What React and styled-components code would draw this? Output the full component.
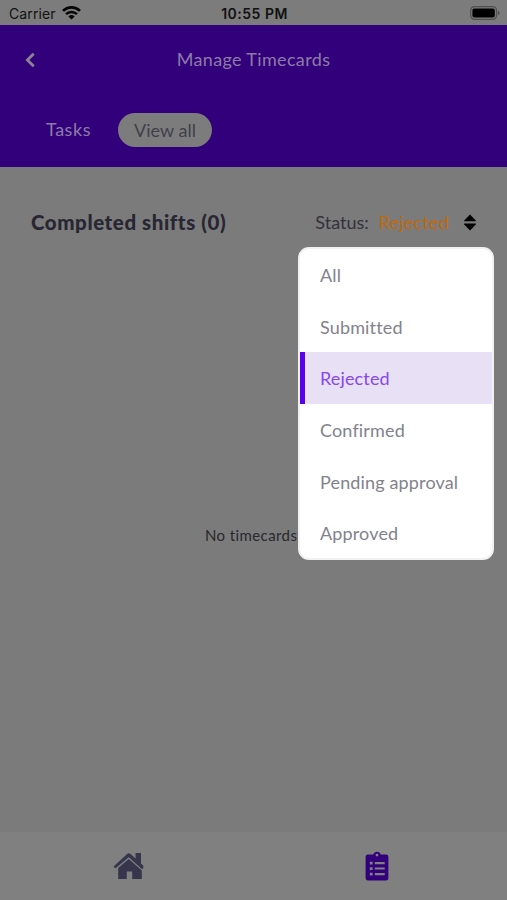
import styled, { createGlobalStyle } from "styled-components";

const GlobalStyle = createGlobalStyle`
  * {
    box-sizing: border-box;
  }

  body {
    margin: 0;
    background: #7b7b7b;
    font-family: Lato, "Open Sans", sans-serif;
  }
`;

const Screen = styled.div`
  display: flex;
  flex-direction: column;
  width: 507px;
  height: 900px;
  overflow: hidden;
  background-color: #7b7b7b;
`;

const StatusBar = styled.div`
  display: grid;
  grid-template-columns: 1fr auto 1fr;
  align-items: center;
  height: 25px;
  padding: 2px 7px 0 9px;
  background-color: #7c7c7c;
  color: #111;
  font-family: Inter, "Liberation Sans", sans-serif;
  font-size: 14px;
`;

const Carrier = styled.div`
  display: flex;
  align-items: center;
  gap: 6px;
  letter-spacing: 0.1px;
`;

const Clock = styled.time`
  font-weight: 600;
  letter-spacing: 0.5px;
`;

const WifiIcon = styled.svg`
  display: block;
  margin-bottom: 2px;
`;

const BatteryIcon = styled.svg`
  display: block;
  justify-self: end;
  margin-bottom: 1px;
`;

const Header = styled.header`
  height: 142px;
  background-color: #33007c;
  color: #8b7ca6;
`;

const TitleRow = styled.div`
  display: grid;
  grid-template-columns: 24px 1fr 24px;
  align-items: center;
  height: 69px;
  padding: 0 18px;
`;

const BackButton = styled.button`
  display: flex;
  justify-content: center;
  padding: 0;
  border: none;
  background: none;
  color: #8a8494;
`;

const Title = styled.h1`
  margin: 0 0 2px;
  font-size: 18px;
  font-weight: 400;
  line-height: 24px;
  letter-spacing: 0.35px;
  text-align: center;
`;

const Tabs = styled.nav`
  display: flex;
  gap: 11px;
  padding: 19px 30px 0;
`;

const Tab = styled.button`
  height: 34px;
  padding: ${(props) => (props.$active ? "0 16px 1px" : "0 16px 3px")};
  border: none;
  border-radius: 17px;
  background-color: ${(props) => (props.$active ? "#7c7c7c" : "transparent")};
  color: ${(props) => (props.$active ? "#41404a" : "#8b7ca6")};
  font-family: inherit;
  font-size: 18px;
  letter-spacing: ${(props) => (props.$active ? "0.05px" : "0.55px")};
`;

const Content = styled.main`
  display: flex;
  flex-direction: column;
  flex-grow: 1;
`;

const ListHeading = styled.div`
  display: flex;
  justify-content: space-between;
  align-items: center;
  height: 110px;
  padding: 0 30px 0 31px;
`;

const Subtitle = styled.h2`
  margin: 0;
  color: #272632;
  font-size: 20.5px;
  font-weight: 900;
  letter-spacing: 0.57px;
`;

const Filter = styled.div`
  position: relative;
  display: flex;
  align-items: center;
  color: #33323c;
  font-size: 18px;
  line-height: 24px;
`;

const FilterValue = styled.span`
  margin: 0 15px 0 10px;
  color: #c0690c;
  letter-spacing: 0.2px;
`;

const Menu = styled.ul`
  position: absolute;
  top: 37px;
  right: -17px;
  width: 196px;
  height: 313px;
  margin: 0;
  padding: 0;
  border: 2px solid #f1f1f3;
  border-radius: 11px;
  background-color: #fff;
  list-style: none;
`;

const MenuItem = styled.li`
  display: flex;
  align-items: center;
  height: 51.7px;
  padding-left: ${(props) => (props.$active ? "15px" : "20px")};
  border-left: ${(props) => (props.$active ? "5px solid #5d00ee" : "none")};
  background-color: ${(props) => (props.$active ? "#e8e0f4" : "transparent")};
  color: ${(props) => (props.$active ? "#8748ec" : "#83828c")};
  letter-spacing: 0.15px;
`;

const EmptyText = styled.p`
  margin: 247px 0 0;
  padding-left: 205px;
  color: #29282e;
  font-size: 15px;
  line-height: 22px;
  letter-spacing: 0.4px;
`;

const BottomNav = styled.nav`
  display: grid;
  grid-template-columns: 1fr 1fr;
  align-items: center;
  height: 68px;
  padding: 0 6px 0 4px;
  background-color: #808080;
`;

const NavItem = styled.button`
  display: flex;
  justify-content: center;
  padding: 0;
  border: none;
  background: none;
  color: ${(props) => (props.$active ? "#33007c" : "#37354b")};
`;

const statuses = [
  "All",
  "Submitted",
  "Rejected",
  "Confirmed",
  "Pending approval",
  "Approved",
];

const Wifi = () => (
  <WifiIcon width="19" height="14" viewBox="0 0 19 14" fill="none" stroke="#050505">
    <path d="M1 4.9a12.2 12.2 0 0 1 17 0" strokeWidth="2.7" />
    <path d="M4 8.2a7.9 7.9 0 0 1 11 0" strokeWidth="2.5" />
    <path d="M9.5 13.6 6.4 10.5a4.5 4.5 0 0 1 6.2 0z" fill="#050505" stroke="none" />
  </WifiIcon>
);

const Battery = () => (
  <BatteryIcon width="30" height="14" viewBox="0 0 30 14">
    <rect x="0.7" y="0.7" width="25.8" height="12.6" rx="3.7" fill="none" stroke="#505050" strokeWidth="1.2" />
    <rect x="2.4" y="2.5" width="22.4" height="9" rx="2" fill="#000" />
    <path d="M27.9 4.8c2.2.9 2.2 3.5 0 4.4z" fill="#505050" />
  </BatteryIcon>
);

const BackIcon = () => (
  <svg width="10" height="16" viewBox="0 0 10 16" fill="none" stroke="currentColor" strokeWidth="2.8">
    <path d="M8.7 1.7 2.4 8l6.3 6.3" />
  </svg>
);

const SortIcon = () => (
  <svg width="13" height="17" viewBox="0 0 13 17" fill="#000">
    <path d="M6 .4 11.8 6.4V7.3H.2V6.4z" />
    <path d="M.2 9.5H11.8V10.4L6 16.4.2 10.4z" />
  </svg>
);

const HomeIcon = () => (
  <svg width="31" height="28" viewBox="0 0 31 28" fill="currentColor">
    <path d="M.6 14.5 14.4 1.8Q15.8.6 17.2 1.8L22.6 6.6V1H28V11.6L30.3 13.8V16.4L28.8 17 15.8 5.3 2.2 16.6z" />
    <path d="M15.8 7.1 28.8 18.5V27H19.2V19.6H13.8V27H5.2V16z" />
  </svg>
);

const TimecardsIcon = () => (
  <svg width="24" height="30" viewBox="0 0 24 30" fill="currentColor">
    <path
      fillRule="evenodd"
      d="M3 3.6H8.3A3.8 3.8 0 0 1 15.7 3.6H21A2.4 2.4 0 0 1 23.4 6V27.2A2.4 2.4 0 0 1 21 29.6H3A2.4 2.4 0 0 1 .6 27.2V6A2.4 2.4 0 0 1 3 3.6ZM12 2.7A1.4 1.4 0 1 0 12 5.5A1.4 1.4 0 1 0 12 2.7ZM4.8 10.8V13.5H7.6V10.8ZM9.8 11.1V13.2H19.7V11.1ZM4.8 16.2V18.9H7.6V16.2ZM9.8 16.5V18.6H19.7V16.5ZM4.8 21.8V24.5H7.6V21.8ZM9.8 22.1V24.2H19.7V22.1Z"
    />
  </svg>
);

const StatusFilter = ({ selected }) => (
  <Filter>
    <span>Status:</span>
    <FilterValue>{selected}</FilterValue>
    <SortIcon />
    <Menu>
      {statuses.map((status) => (
        <MenuItem key={status} $active={status === selected}>
          {status}
        </MenuItem>
      ))}
    </Menu>
  </Filter>
);

const App = () => {
  return (
    <>
      <GlobalStyle />
      <Screen>
        <StatusBar>
          <Carrier>
            Carrier
            <Wifi />
          </Carrier>
          <Clock>10:55 PM</Clock>
          <Battery />
        </StatusBar>
        <Header>
          <TitleRow>
            <BackButton>
              <BackIcon />
            </BackButton>
            <Title>Manage Timecards</Title>
          </TitleRow>
          <Tabs>
            <Tab>Tasks</Tab>
            <Tab $active>View all</Tab>
          </Tabs>
        </Header>
        <Content>
          <ListHeading>
            <Subtitle>Completed shifts (0)</Subtitle>
            <StatusFilter selected="Rejected" />
          </ListHeading>
          <EmptyText>No timecards</EmptyText>
        </Content>
        <BottomNav>
          <NavItem>
            <HomeIcon />
          </NavItem>
          <NavItem $active>
            <TimecardsIcon />
          </NavItem>
        </BottomNav>
      </Screen>
    </>
  );
};

export default App;
